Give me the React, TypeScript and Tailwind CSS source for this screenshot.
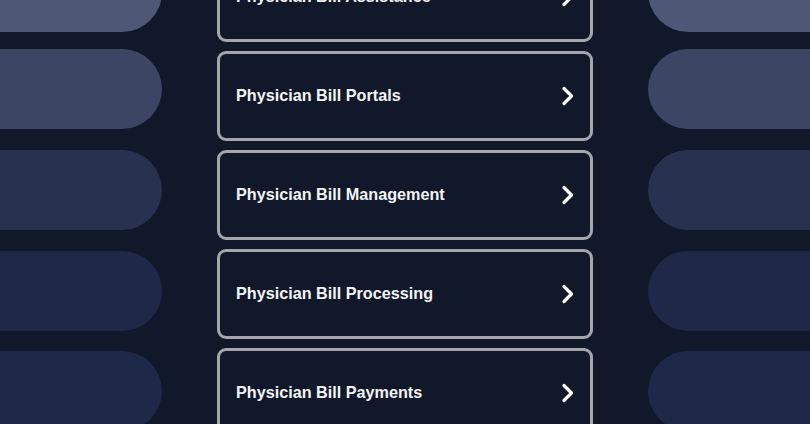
const links = [
  "Physician Bill Assistance",
  "Physician Bill Portals",
  "Physician Bill Management",
  "Physician Bill Processing",
  "Physician Bill Payments",
];

const pills = [
  { color: "bg-[#4e5776]", space: "" },
  { color: "bg-[#3c4563]", space: "mt-[17px]" },
  { color: "bg-[#293150]", space: "mt-[21px]" },
  { color: "bg-[#1f2849]", space: "mt-[21px]" },
  { color: "bg-[#1e2848]", space: "mt-[20px]" },
];

function Chevron() {
  return (
    <svg width="14" height="20" viewBox="0 0 14 20" fill="none">
      <path
        d="M3 2.5 L10.5 10 L3 17.5"
        stroke="#ffffff"
        strokeWidth="3.2"
        strokeLinecap="round"
        strokeLinejoin="round"
      />
    </svg>
  );
}

export default function App() {
  return (
    <div className="w-[810px] h-[424px] overflow-hidden bg-[#111829] font-['Liberation_Sans',Arial,sans-serif]">
      <div className="flex justify-between -mt-[48px]">
        <div className="w-[162px] flex flex-col">
          {pills.map((p, i) => (
            <div key={i} className={`h-[80px] rounded-r-[40px] ${p.color} ${p.space}`} />
          ))}
        </div>

        <div className="w-[376px] flex flex-col gap-[9px]">
          {links.map((title) => (
            <a
              key={title}
              href="#"
              className="h-[90px] flex items-center justify-between rounded-[9px] border-[3px] border-[#a3a6ad] pl-[16px] pr-[15px]"
            >
              <span className="text-[16.2px] font-bold text-[#f3f4f6] -mt-px">{title}</span>
              <Chevron />
            </a>
          ))}
        </div>

        <div className="w-[162px] flex flex-col">
          {pills.map((p, i) => (
            <div key={i} className={`h-[80px] rounded-l-[40px] ${p.color} ${p.space}`} />
          ))}
        </div>
      </div>
    </div>
  );
}
